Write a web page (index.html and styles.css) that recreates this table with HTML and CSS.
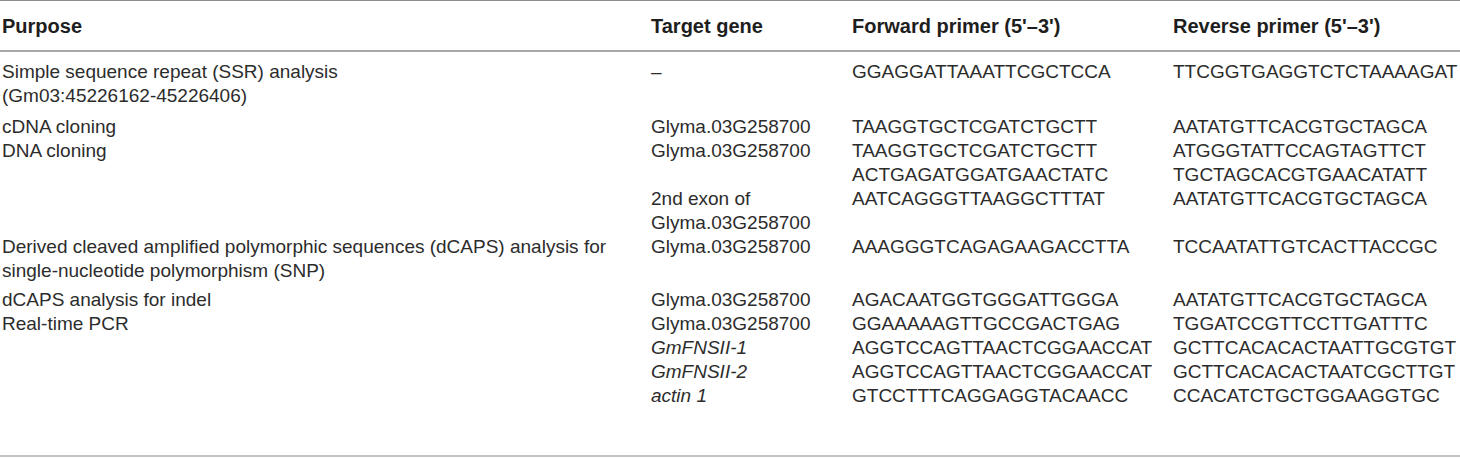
FILE: index.html
```html
<!DOCTYPE html>
<html lang="en">
<head>
<meta charset="utf-8">
<title>Primers</title>
<link rel="stylesheet" href="styles.css">
</head>
<body>
<table class="primers">
  <colgroup>
    <col class="c-purpose">
    <col class="c-gene">
    <col class="c-fwd">
    <col class="c-rev">
  </colgroup>
  <thead>
    <tr>
      <th>Purpose</th>
      <th>Target gene</th>
      <th>Forward primer (5'–3')</th>
      <th>Reverse primer (5'–3')</th>
    </tr>
  </thead>
  <tbody>
    <tr class="first spaced">
      <td>Simple sequence repeat (SSR) analysis<br>(Gm03:45226162-45226406)</td>
      <td>–</td>
      <td>GGAGGATTAAATTCGCTCCA</td>
      <td>TTCGGTGAGGTCTCTAAAAGAT</td>
    </tr>
    <tr>
      <td>cDNA cloning</td>
      <td>Glyma.03G258700</td>
      <td>TAAGGTGCTCGATCTGCTT</td>
      <td>AATATGTTCACGTGCTAGCA</td>
    </tr>
    <tr>
      <td>DNA cloning</td>
      <td>Glyma.03G258700</td>
      <td>TAAGGTGCTCGATCTGCTT<br>ACTGAGATGGATGAACTATC</td>
      <td>ATGGGTATTCCAGTAGTTCT<br>TGCTAGCACGTGAACATATT</td>
    </tr>
    <tr>
      <td></td>
      <td>2nd exon of<br>Glyma.03G258700</td>
      <td>AATCAGGGTTAAGGCTTTAT</td>
      <td>AATATGTTCACGTGCTAGCA</td>
    </tr>
    <tr class="spaced-sm">
      <td>Derived cleaved amplified polymorphic sequences (dCAPS) analysis for<br>single-nucleotide polymorphism (SNP)</td>
      <td>Glyma.03G258700</td>
      <td>AAAGGGTCAGAGAAGACCTTA</td>
      <td>TCCAATATTGTCACTTACCGC</td>
    </tr>
    <tr>
      <td>dCAPS analysis for indel</td>
      <td>Glyma.03G258700</td>
      <td>AGACAATGGTGGGATTGGGA</td>
      <td>AATATGTTCACGTGCTAGCA</td>
    </tr>
    <tr>
      <td>Real-time PCR</td>
      <td>Glyma.03G258700</td>
      <td>GGAAAAAGTTGCCGACTGAG</td>
      <td>TGGATCCGTTCCTTGATTTC</td>
    </tr>
    <tr>
      <td></td>
      <td><i>GmFNSII-1</i></td>
      <td>AGGTCCAGTTAACTCGGAACCAT</td>
      <td>GCTTCACACACTAATTGCGTGT</td>
    </tr>
    <tr>
      <td></td>
      <td><i>GmFNSII-2</i></td>
      <td>AGGTCCAGTTAACTCGGAACCAT</td>
      <td>GCTTCACACACTAATCGCTTGT</td>
    </tr>
    <tr class="last">
      <td></td>
      <td><i>actin 1</i></td>
      <td>GTCCTTTCAGGAGGTACAACC</td>
      <td>CCACATCTGCTGGAAGGTGC</td>
    </tr>
  </tbody>
</table>
</body>
</html>
```

FILE: styles.css
```css
html, body {
  margin: 0;
  padding: 0;
  background: #ffffff;
}

.primers {
  width: 1460px;
  border-collapse: collapse;
  table-layout: fixed;
  font-family: "Liberation Sans", Arial, sans-serif;
  color: #2c2c2c;
  border-top: 1px solid #8c8c8c;
  border-bottom: 2px solid #c4c4c4;
}

.c-purpose { width: 651px; }
.c-gene { width: 201px; }
.c-fwd { width: 321px; }
.c-rev { width: 287px; }

.primers th {
  font-size: 20px;
  font-weight: bold;
  color: #1e1e1e;
  text-align: left;
  height: 49px;
  padding: 0;
  vertical-align: middle;
  line-height: 24px;
  border-bottom: 2px solid #a8a8a8;
}

.primers td {
  font-size: 19px;
  line-height: 24px;
  padding: 0;
  vertical-align: top;
  white-space: nowrap;
}

.primers th:first-child,
.primers td:first-child {
  padding-left: 2px;
}

.primers tr.first td {
  padding-top: 8px;
}

.primers tr.spaced td {
  padding-bottom: 7px;
}

.primers tr.spaced-sm td {
  padding-bottom: 5px;
}

.primers tr.last td {
  padding-bottom: 47px;
}

.primers i {
  font-style: italic;
}
```
